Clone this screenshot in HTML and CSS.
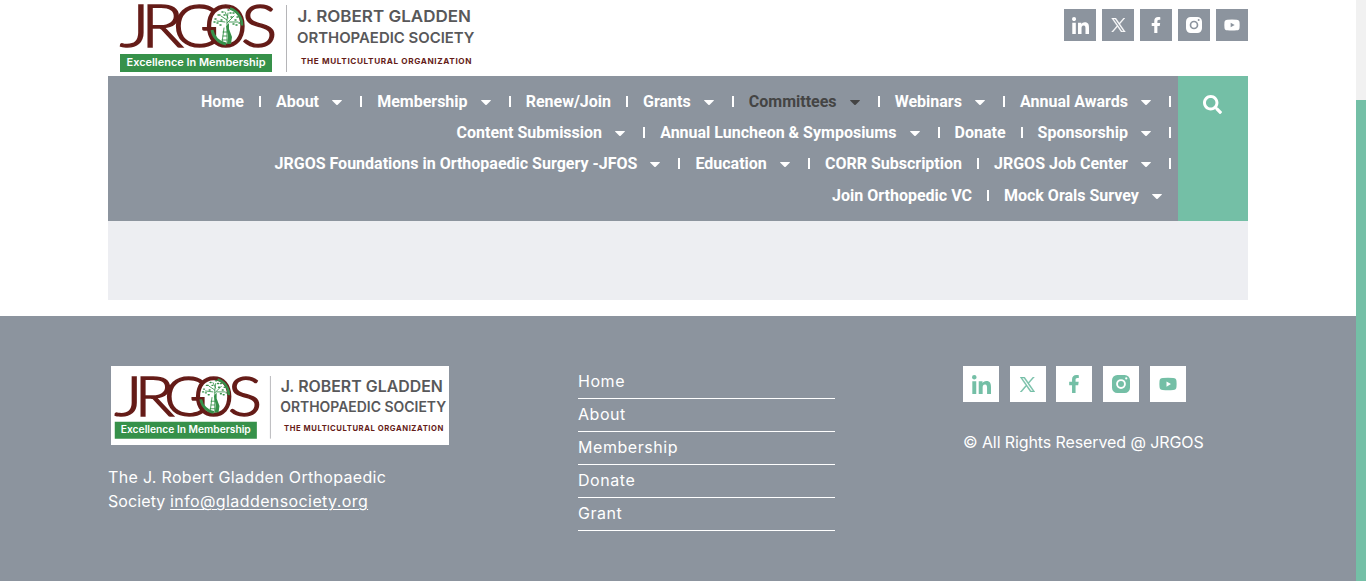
FILE: index.html
```html
<!DOCTYPE html>
<html lang="en">
<head>
<meta charset="utf-8">
<title>J. Robert Gladden Orthopaedic Society</title>
<link rel="stylesheet" href="styles.css">
</head>
<body>
<svg class="defs" width="0" height="0" aria-hidden="true">
  <defs>
    <g id="logo">
      <g class="logo-mark">
        <text transform="translate(11.700 47.300) scale(1.240 1)" x="0" y="0">J</text>
        <text transform="translate(33 47.300) scale(1.200 1)" x="0" y="0">R</text>
        <text transform="translate(65 47.300) scale(1.080 1)" x="0" y="0">G</text>
        <text transform="translate(96.500 47.300) scale(.920 1)" x="0" y="0">O</text>
        <text transform="translate(133 47.300) scale(1.160 1)" x="0" y="0">S</text>
      </g>
      <path d="M122 8.500a17 17 0 0 1 12 17" fill="none" stroke="#36914a" stroke-width="2.500"/>
      <path d="M104 30a17 17 0 0 0 14 14" fill="none" stroke="#36914a" stroke-width="3"/>
      <g fill="none" stroke="#36914a" stroke-width=".900" stroke-linecap="round">
        <path d="M119 25V20L113 16M119 23l7-7M119 20l1-7M117 22l-8-1M121 22l9 0M120 18l-3-6"/>
        <path d="M116 28l-2 15M119 27v17M115 32h4M115 36h4M114 40h5"/>
        <path d="M107 19h1M110 15h2M114 12h1M120 10h1M125 13h1M129 17h1M127 20h1M131 23h1M109 23h1M113 20h1M123 17h1M125 24h1M106 22h1M112 25h1M122 13h1M128 25h1M116 15h1" stroke-width="1.500"/>
      </g>
      <path d="M118 26l3-3v6l3 8-1 7h-4l1-8z" fill="#36914a"/>
      <path d="M12 54h152v18H12z" fill="#36914a"/>
      <text class="logo-tag" x="18.500" y="65.700" textLength="139" lengthAdjust="spacingAndGlyphs">Excellence In Membership</text>
      <path d="M178.500 5v67" stroke="#b5b5b8"/>
      <text class="logo-name" x="189.500" y="22" textLength="173.500" lengthAdjust="spacingAndGlyphs">J. ROBERT GLADDEN</text>
      <text class="logo-society" x="189" y="43" textLength="177.500" lengthAdjust="spacingAndGlyphs">ORTHOPAEDIC SOCIETY</text>
      <text class="logo-org" x="193" y="63.500" textLength="170.500">THE MULTICULTURAL ORGANIZATION</text>
    </g>
    <symbol id="linkedin" viewBox="0 0 448 448"><path d="M100.280 448H7.400V148.900h92.880zM53.790 108.100C24.090 108.100 0 83.500 0 53.800a53.790 53.790 0 0 1 107.580 0c0 29.700-24.100 54.300-53.790 54.300zM447.900 448h-92.680V302.400c0-34.700-.7-79.200-48.290-79.200-48.290 0-55.690 37.700-55.690 76.700V448h-92.780V148.900h89.080v40.800h1.300c12.400-23.500 42.690-48.300 87.880-48.300 94 0 111.280 61.900 111.280 142.300V448z"/></symbol>
    <symbol id="x" viewBox="0 0 24 24"><path d="M14.230 10.160 22.980 0h-2.070l-7.600 8.820L7.250 0H.25l9.170 13.350L.25 24h2.070l8.020-9.320L16.750 24h7zM11.400 13.460l-.93-1.330L3.070 1.560h3.180l5.970 8.530.93 1.330 7.760 11.100h-3.180z"/></symbol>
    <symbol id="facebook" viewBox="0 0 320 512"><path d="M279.140 288l14.220-92.660h-88.910v-60.130c0-25.350 12.420-50.060 52.240-50.060h40.420V6.260S260.430 0 225.360 0c-73.220 0-121.080 44.380-121.080 124.720v70.620H22.890V288h81.390v224h100.170V288z"/></symbol>
    <symbol id="instagram" viewBox="0 0 24 24"><path fill-rule="evenodd" d="M7 0h10a7 7 0 0 1 7 7v10a7 7 0 0 1-7 7H7a7 7 0 0 1-7-7V7a7 7 0 0 1 7-7zm5 5.500a6.500 6.500 0 1 0 0 13 6.500 6.500 0 0 0 0-13zm0 2.500a4 4 0 1 1 0 8 4 4 0 0 1 0-8zm7-5a1.500 1.500 0 1 0 0 3A1.500 1.500 0 0 0 19 3z"/></symbol>
    <symbol id="youtube" viewBox="0 0 24 24"><path fill-rule="evenodd" d="M5 4Q12 3.300 19 4q4 0 4.300 4 .4 4 0 8-.3 4-4.300 4-7 .7-14 0-4 0-4.300-4-.4-4 0-8Q1 4 5 4zm5 4.500v7l6-3.500z"/></symbol>
    <symbol id="caret" viewBox="0 0 10 5"><path d="M.6 0h8.800q.9.100.3.800L5.700 4.700q-.7.600-1.400 0L.3.800Q-.3.100.6 0z"/></symbol>
    <symbol id="search" viewBox="0 0 512 512"><path d="M505 442.700L405.300 343c-4.500-4.500-10.600-7-17-7H372c27.600-35.300 44-79.700 44-128C416 93.100 322.900 0 208 0S0 93.100 0 208s93.100 208 208 208c48.300 0 92.700-16.400 128-44v16.300c0 6.400 2.500 12.500 7 17l99.700 99.700c9.400 9.400 24.600 9.400 33.900 0l28.300-28.300c9.400-9.400 9.400-24.600.1-34zM208 336c-70.700 0-128-57.200-128-128 0-70.700 57.200-128 128-128 70.700 0 128 57.200 128 128 0 70.700-57.200 128-128 128z"/></symbol>
  </defs>
</svg>
<div class="window">
  <div class="page">
    <header class="container">
      <div class="topbar">
        <svg class="brand" viewBox="0 0 370 76" role="img" aria-label="JRGOS"><use href="#logo"/></svg>
        <div class="social">
          <a><svg class="linkedin"><use href="#linkedin"/></svg></a>
          <a><svg class="x"><use href="#x"/></svg></a>
          <a><svg><use href="#facebook"/></svg></a>
          <a><svg><use href="#instagram"/></svg></a>
          <a><svg><use href="#youtube"/></svg></a>
        </div>
      </div>
      <div class="navbar">
        <nav class="menu">
          <div class="row">
            <a>Home</a><a class="sub">About<svg><use href="#caret"/></svg></a><a class="sub">Membership<svg><use href="#caret"/></svg></a><a>Renew/Join</a><a class="sub">Grants<svg><use href="#caret"/></svg></a><a class="sub current">Committees<svg><use href="#caret"/></svg></a><a class="sub">Webinars<svg><use href="#caret"/></svg></a><a class="sub">Annual Awards<svg><use href="#caret"/></svg></a>
          </div>
          <div class="row">
            <a class="sub">Content Submission<svg><use href="#caret"/></svg></a><a class="sub">Annual Luncheon &amp; Symposiums<svg><use href="#caret"/></svg></a><a>Donate</a><a class="sub">Sponsorship<svg><use href="#caret"/></svg></a>
          </div>
          <div class="row">
            <a class="sub">JRGOS Foundations in Orthopaedic Surgery -JFOS<svg><use href="#caret"/></svg></a><a class="sub">Education<svg><use href="#caret"/></svg></a><a>CORR Subscription</a><a class="sub">JRGOS Job Center<svg><use href="#caret"/></svg></a>
          </div>
          <div class="row last">
            <a>Join Orthopedic VC</a><a class="sub">Mock Orals Survey<svg><use href="#caret"/></svg></a>
          </div>
        </nav>
        <div class="search"><svg><use href="#search"/></svg></div>
      </div>
      <div class="banner"></div>
    </header>
    <footer class="footer">
      <div class="container footer-grid">
        <section class="about">
          <svg class="card-logo" viewBox="8 -5.700 361.500 84.500" role="img" aria-label="JRGOS"><use href="#logo"/></svg>
          <p>The J. Robert Gladden Orthopaedic<br><span class="contact-line">Society <a>info@gladdensociety.org</a></span></p>
        </section>
        <ul class="links">
          <li>Home</li><li>About</li><li>Membership</li><li>Donate</li><li>Grant</li>
        </ul>
        <section class="contact">
          <div class="social">
            <a><svg class="linkedin"><use href="#linkedin"/></svg></a>
            <a><svg class="x"><use href="#x"/></svg></a>
            <a><svg><use href="#facebook"/></svg></a>
            <a><svg><use href="#instagram"/></svg></a>
            <a><svg><use href="#youtube"/></svg></a>
          </div>
          <p>© All Rights Reserved @ JRGOS</p>
        </section>
      </div>
    </footer>
  </div>
  <div class="scrollbar"><div class="thumb"></div></div>
</div>
</body>
</html>
```
FILE: styles.css
```css
* { box-sizing: border-box; }
body { margin: 0; background: #fff; font-family: Inter, "Liberation Sans", sans-serif; }
.defs { display: block; }
.window { display: flex; height: 581px; overflow: hidden; }
.page { width: 1356px; display: flex; flex-direction: column; }
.container { width: 1140px; margin: 0 auto; }
.scrollbar { width: 10px; background: #f1f1f1; padding-top: 100px; }
.thumb { height: 481px; background: #74bfa6; }

.topbar { height: 76px; display: flex; justify-content: space-between; align-items: flex-start; }
.brand { width: 370px; height: 76px; display: block; }
.logo-mark { font: 300 58.500px Lato, sans-serif; fill: #651c18; }
.logo-mark text { stroke: #651c18; stroke-width: 1.600; vector-effect: non-scaling-stroke; }
.logo-tag { font: 600 10.500px Inter, sans-serif; fill: #fff; }
.logo-name { font: 600 16.500px Inter, sans-serif; fill: #58585a; }
.logo-society { font: 600 14.800px Inter, sans-serif; fill: #58585a; }
.logo-org { font: 700 8.200px Inter, sans-serif; fill: #651c18; }

.social { display: flex; }
.social a { display: flex; align-items: center; justify-content: center; }
.topbar .social { gap: 6px; padding-top: 9px; }
.topbar .social a { width: 32px; height: 32px; background: #8c949e; fill: #fff; }
.topbar .social svg { width: 16px; height: 16px; }
.topbar .social .linkedin { width: 17px; height: 17px; }
.topbar .social .x { width: 15px; height: 14px; stroke: #fff; stroke-width: .8; }

.navbar { height: 145px; display: flex; background: #8c949e; }
.menu { flex: 1; padding-top: 10px; font: 700 16px Roboto, sans-serif; color: #fff; fill: #fff; }
.row { height: 31px; display: flex; justify-content: flex-end; align-items: center; padding-right: 7px; }
.row a { display: flex; align-items: center; white-space: nowrap; }
.row a + a { padding-left: 15px; }
.row a::after { content: ""; width: 2px; height: 11px; margin-left: 15px; background: #fff; }
.row .sub svg { width: 10px; height: 5px; margin: 2px 3px 0 13.100px; }
.row .current { color: #444; fill: #444; }
.row.last { padding-right: 16px; height: 33px; }
.row.last a:last-child::after { display: none; }
.row.last a:last-child svg { margin-right: 0; }
.search { width: 70px; background: #74bfa6; display: flex; justify-content: center; padding: 19px 1px 0 0; fill: #fff; }
.search svg { width: 19px; height: 19px; }
.banner { height: 79px; background: #edeef2; }

.footer { margin-top: 16px; flex: 1; background: #8c949e; color: #fff; padding-top: 50px; }
.footer-grid { display: grid; grid-template-columns: 470px 385px 285px; font-size: 16px; }
.footer p { margin: 0; white-space: nowrap; line-height: 24px; }
.card-logo { display: block; width: 338px; height: 79px; margin-left: 3px; background: #fff; }
.about p { padding-top: 20px; letter-spacing: .320px; }
.contact-line { letter-spacing: .100px; }
.about a { letter-spacing: .400px; text-decoration: underline; text-underline-offset: 2px; text-decoration-thickness: 1px; }
.links { list-style: none; margin: 0; padding: 0; width: 257px; letter-spacing: .550px; }
.links li { height: 33px; line-height: 30px; border-bottom: 1px solid #fff; }
.contact .social { gap: 10.700px; }
.contact .social a { width: 36px; height: 36px; background: #fff; fill: #74bfa6; }
.contact .social svg { width: 18px; height: 18px; }
.contact .social .linkedin { width: 19px; height: 19px; }
.contact .social .x { width: 17px; height: 15px; stroke: #74bfa6; stroke-width: .8; }
.contact p { padding-top: 28px; letter-spacing: -.100px; }
```
